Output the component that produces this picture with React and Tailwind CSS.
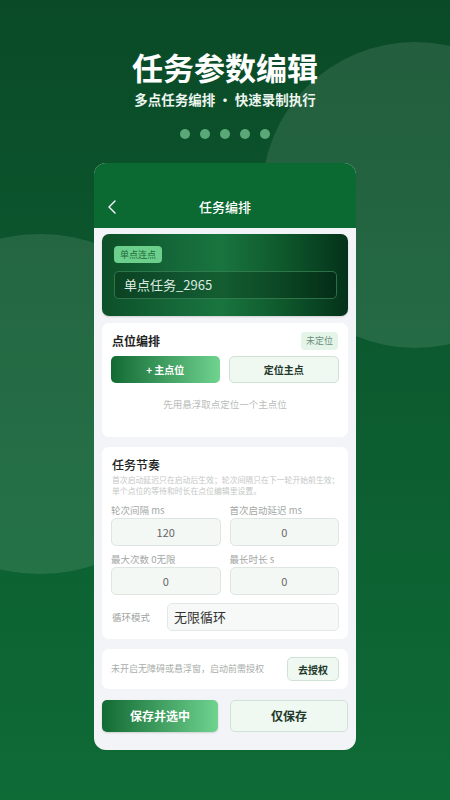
import React from "react";
import { ChevronLeft } from "lucide-react";

const font = { fontFamily: '"Noto Sans CJK SC", "Noto Sans", sans-serif' };

function Field({ label, value }) {
  return (
    <div className="flex-1 flex flex-col">
      <div className="text-[9.5px] leading-[12px] text-[#a3a8a5]">{label}</div>
      <div className="mt-[2px] h-[28px] rounded-[5px] border border-[#dde6e0] bg-[#f4f8f5] flex items-center justify-center text-[11px] text-[#666]">
        {value}
      </div>
    </div>
  );
}

export default function App() {
  return (
    <div
      className="relative w-[450px] h-[800px] overflow-hidden bg-[linear-gradient(180deg,#0a4a27_0%,#0c5a2f_45%,#0e6b36_100%)]"
      style={font}
    >
      <div className="absolute left-[262px] top-[42px] w-[306px] h-[306px] rounded-full bg-[#ffffff]/10" />
      <div className="absolute left-[-130px] top-[234px] w-[340px] h-[340px] rounded-full bg-[#ffffff]/10" />

      <div className="relative flex flex-col items-center pt-[50px]">
        <div className="text-[31px] leading-[34px] font-bold text-white">任务参数编辑</div>
        <div className="mt-[6px] text-[13.5px] leading-[18px] font-bold text-[#eaf5ee]">多点任务编排 • 快速录制执行</div>
        <div className="mt-[21px] flex gap-[10px]">
          <span className="w-[10px] h-[10px] rounded-full bg-[#5aa878]" />
          <span className="w-[10px] h-[10px] rounded-full bg-[#5aa878]" />
          <span className="w-[10px] h-[10px] rounded-full bg-[#5aa878]" />
          <span className="w-[10px] h-[10px] rounded-full bg-[#5aa878]" />
          <span className="w-[10px] h-[10px] rounded-full bg-[#5aa878]" />
        </div>

        <div className="mt-[24px] w-[262px] rounded-[12px] overflow-hidden bg-[#f2f4f7] flex flex-col">
          <div className="h-[65px] bg-[#0a6a32] flex flex-col justify-end">
            <div className="relative h-[42px] flex items-center justify-center">
              <ChevronLeft className="absolute left-[6px] top-[9px] text-white" size={24} strokeWidth={1.4} />
              <span className="text-[13px] font-medium text-white">任务编排</span>
            </div>
          </div>

          <div className="px-[8px] pt-[6px] pb-[18px] flex flex-col">
            {/* task name card */}
            <div className="h-[82px] rounded-[7px] px-[12px] pt-[12px] flex flex-col bg-[linear-gradient(90deg,#0d4f28_0%,#15683a_30%,#19753e_48%,#0f5a2d_72%,#04321a_100%)] shadow-[0_1px_2px_rgba(0,0,0,0.15)]">
              <div className="self-start h-[17px] px-[6px] rounded-[4px] bg-[#6ccf8c] flex items-center text-[9px] text-[#1f6b3a]">单点连点</div>
              <div className="mt-[8px] mr-[-1px] h-[28px] rounded-[5px] border border-[#3d8a58]/70 bg-[#000000]/20 flex items-center px-[9px] text-[13px] text-[#dcebe0]">
                单点任务_2965
              </div>
            </div>

            {/* point editing */}
            <div className="mt-[7px] h-[114px] rounded-[7px] bg-white px-[9px] pt-[9px] flex flex-col">
              <div className="flex items-center justify-between">
                <span className="text-[12px] leading-[18px] font-bold text-[#222] pl-[1px]">点位编排</span>
                <span className="h-[18px] px-[5px] rounded-[4px] bg-[#e4f4e9] flex items-center text-[9px] text-[#6c8f78] mr-[1px]">未定位</span>
              </div>
              <div className="mt-[6px] flex gap-[9px]">
                <div className="flex-1 h-[27px] rounded-[5px] bg-[linear-gradient(90deg,#126a33,#6fd38f)] flex items-center justify-center text-[10px] font-bold text-white">
                  + 主点位
                </div>
                <div className="flex-1 h-[27px] rounded-[5px] border border-[#cfe2d5] bg-[#eff8f1] flex items-center justify-center text-[10px] font-bold text-[#22382a]">
                  定位主点
                </div>
              </div>
              <div className="mt-[14px] text-center text-[9.5px] text-[#b9bcba]">先用悬浮取点定位一个主点位</div>
            </div>

            {/* rhythm */}
            <div className="mt-[10px] rounded-[7px] bg-white px-[9px] pt-[10px] pb-[8px] flex flex-col">
              <div className="text-[12px] leading-[16px] font-medium text-[#222] pl-[1px]">任务节奏</div>
              <div className="mt-[1px] text-[7.85px] leading-[11px] text-[#c4c7c5] pl-[1px] whitespace-nowrap">
                <div>首次启动延迟只在启动后生效；轮次间隔只在下一轮开始前生效；</div>
                <div>单个点位的等待和时长在点位编辑里设置。</div>
              </div>
              <div className="mt-[8px] flex gap-[9px]">
                <Field label="轮次间隔 ms" value="120" />
                <Field label="首次启动延迟 ms" value="0" />
              </div>
              <div className="mt-[7px] flex gap-[9px]">
                <Field label="最大次数 0无限" value="0" />
                <Field label="最长时长 s" value="0" />
              </div>
              <div className="mt-[8px] flex items-center">
                <span className="w-[56px] text-[9.5px] text-[#9fa39f] pl-[1px]">循环模式</span>
                <div className="flex-1 h-[28px] rounded-[5px] border border-[#e3e8e4] bg-[#f6f9f7] flex items-center px-[6px] text-[13px] text-[#333]">
                  无限循环
                </div>
              </div>
            </div>

            {/* permission */}
            <div className="mt-[10px] h-[40px] rounded-[7px] bg-white pl-[9px] pr-[9px] flex items-center justify-between">
              <span className="text-[9px] text-[#a9adaa]">未开启无障碍或悬浮窗，启动前需授权</span>
              <div className="w-[52px] h-[24px] rounded-[5px] border border-[#cfe2d5] bg-[#eff8f1] flex items-center justify-center text-[10px] font-bold text-[#22382a]">
                去授权
              </div>
            </div>

            {/* bottom buttons */}
            <div className="mt-[11px] flex gap-[12px]">
              <div className="w-[116px] h-[32px] rounded-[5px] bg-[linear-gradient(90deg,#126a33,#6fd38f)] flex items-center justify-center text-[12px] font-bold text-white shadow-[0_1px_2px_rgba(0,0,0,0.15)]">
                保存并选中
              </div>
              <div className="flex-1 h-[32px] rounded-[5px] border border-[#cfe2d5] bg-[#eff8f1] flex items-center justify-center text-[12px] font-bold text-[#22382a]">
                仅保存
              </div>
            </div>
          </div>
        </div>
      </div>
    </div>
  );
}
